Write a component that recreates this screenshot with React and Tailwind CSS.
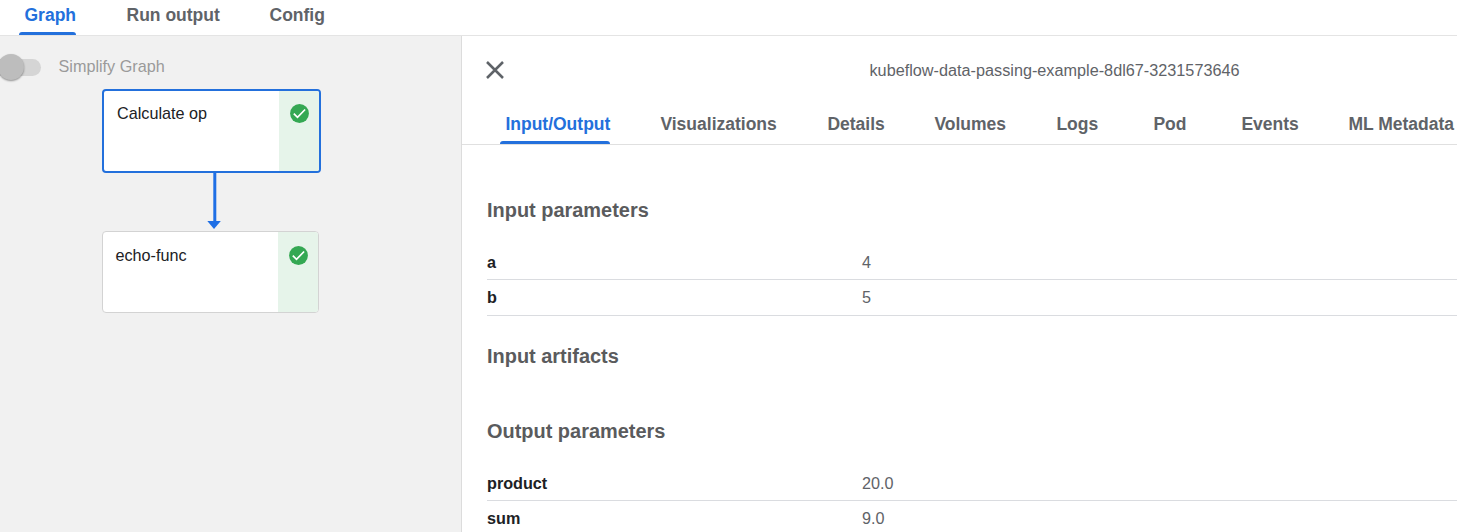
const detailTabs = [
  ['Input/Output', 'w-[155px]'],
  ['Visualizations', 'w-[167px]'],
  ['Details', 'w-[107px]'],
  ['Volumes', 'w-[122px]'],
  ['Logs', 'w-[97px]'],
  ['Pod', 'w-[88px]'],
  ['Events', 'w-[107px]'],
  ['ML Metadata', 'w-[109px]'],
];

function StatusIcon() {
  return (
    <svg viewBox="0 0 19 19" className="size-[19px]" fill="none">
      <circle cx="9.5" cy="9.5" r="9.4" fill="#34a853" />
      <path d="M3.8 9.6l3.7 3.7 7.6-7.8" stroke="#fff" strokeWidth="1.7" />
    </svg>
  );
}

function ParamRow({ name, value, height }) {
  return (
    <div className={`flex shrink-0 items-start border-b border-[#dadce0] pt-[7px] ${height}`}>
      <span className="w-[375px] font-bold text-[#202124]">{name}</span>
      <span className="text-[#5f6368]">{value}</span>
    </div>
  );
}

function Heading({ children, className }) {
  return <h2 className={`shrink-0 text-[19.95px] leading-6 font-bold text-[#5a5b5d] ${className}`}>{children}</h2>;
}

export default function App() {
  return (
    <div className="flex h-[532px] w-[1457px] flex-col overflow-hidden bg-white font-['Liberation_Sans',sans-serif] text-[16.2px] leading-5">
      <nav className="flex h-9 shrink-0 border-b border-[#e4e4e4] text-[17.5px] font-bold text-[#5f6368]">
        <div className="relative w-[102px] pt-[5px] pl-[24.5px] text-[#2370dc]">
          Graph
          <span className="absolute bottom-0 left-[19px] h-[3px] w-[57px] rounded-t-[3px] bg-[#2370dc]" />
        </div>
        <div className="w-[143px] pt-[5px] pl-[24.5px]">Run output</div>
        <div className="pt-[5px] pl-[24.5px]">Config</div>
      </nav>
      <div className="flex min-h-0 flex-1">
        <section className="relative w-[461px] shrink-0 bg-[#f1f1f1]">
          <div className="flex items-start pt-[20px]">
            <div className="relative flex h-[22px] w-[41px] items-center">
              <span className="h-[17px] w-[41px] rounded-r-full bg-[#d5d5d5]" />
              <span className="absolute -top-[2px] -left-[2px] size-[26px] rounded-full bg-[#bdbdbd] shadow-[0_1px_2px_rgba(0,0,0,0.4)]" />
            </div>
            <span className="pl-[17.5px] text-[#9a9a9a]">Simplify Graph</span>
          </div>
          <div className="absolute top-[53px] left-[102px] flex h-[84px] w-[219px] overflow-hidden rounded-[4px] border-2 border-[#2370dc] bg-white">
            <span className="flex-1 pt-[12px] pl-[13px] text-[#202124]">Calculate op</span>
            <span className="flex w-10 justify-center bg-[#e6f4ea] pt-[13px]"><StatusIcon /></span>
          </div>
          <svg className="absolute top-[137px] left-[204px] h-[58px] w-[20px]" viewBox="0 0 20 58" fill="#1f6fe5">
            <path d="M9.3 0h3v49h-3z" />
            <path d="M3.3 48h13.5L10 56z" />
          </svg>
          <div className="absolute top-[195px] left-[102px] flex h-[82px] w-[217px] overflow-hidden rounded-[4px] border border-[#d3d3d3] bg-white">
            <span className="flex-1 pt-[13px] pl-[12.5px] text-[#202124]">echo-func</span>
            <span className="flex w-10 justify-center bg-[#e6f4ea] pt-[14px]"><StatusIcon /></span>
          </div>
        </section>
        <section className="flex min-w-0 flex-1 flex-col overflow-hidden border-l border-[#dcdcdc]">
          <header className="flex h-[68px] shrink-0 items-center pl-[24px]">
            <svg viewBox="0 0 18 18" className="size-[18px] shrink-0" stroke="#5f6368" strokeWidth="2.5">
              <path d="M1 1l16 16M17 1L1 17" />
            </svg>
            <span className="pl-[365.5px] text-[16.24px] whitespace-nowrap text-[#5f6368]">kubeflow-data-passing-example-8dl67-3231573646</span>
          </header>
          <nav className="relative flex h-[41px] shrink-0 border-b border-[#e0e0e0] pt-[10px] pl-[43.4px] text-[17.5px] font-bold whitespace-nowrap text-[#5f6368]">
            {detailTabs.map(([label, width], i) => (
              <span key={label} className={`shrink-0 ${width} ${i === 0 ? 'text-[#2370dc]' : ''}`}>{label}</span>
            ))}
            <span className="absolute bottom-0 left-[37.5px] h-[3px] w-[110px] rounded-t-[3px] bg-[#2370dc]" />
          </nav>
          <main className="flex min-h-0 flex-1 flex-col overflow-hidden pl-[25px]">
            <Heading className="mt-[53px]">Input parameters</Heading>
            <div className="mt-[23px] flex shrink-0 flex-col">
              <ParamRow name="a" value="4" height="h-[35px]" />
              <ParamRow name="b" value="5" height="h-[36px]" />
            </div>
            <Heading className="mt-[28px]">Input artifacts</Heading>
            <Heading className="mt-[51px]">Output parameters</Heading>
            <div className="mt-[23px] flex shrink-0 flex-col">
              <ParamRow name="product" value="20.0" height="h-[35px]" />
              <ParamRow name="sum" value="9.0" height="h-[36px]" />
            </div>
          </main>
        </section>
      </div>
    </div>
  );
}
